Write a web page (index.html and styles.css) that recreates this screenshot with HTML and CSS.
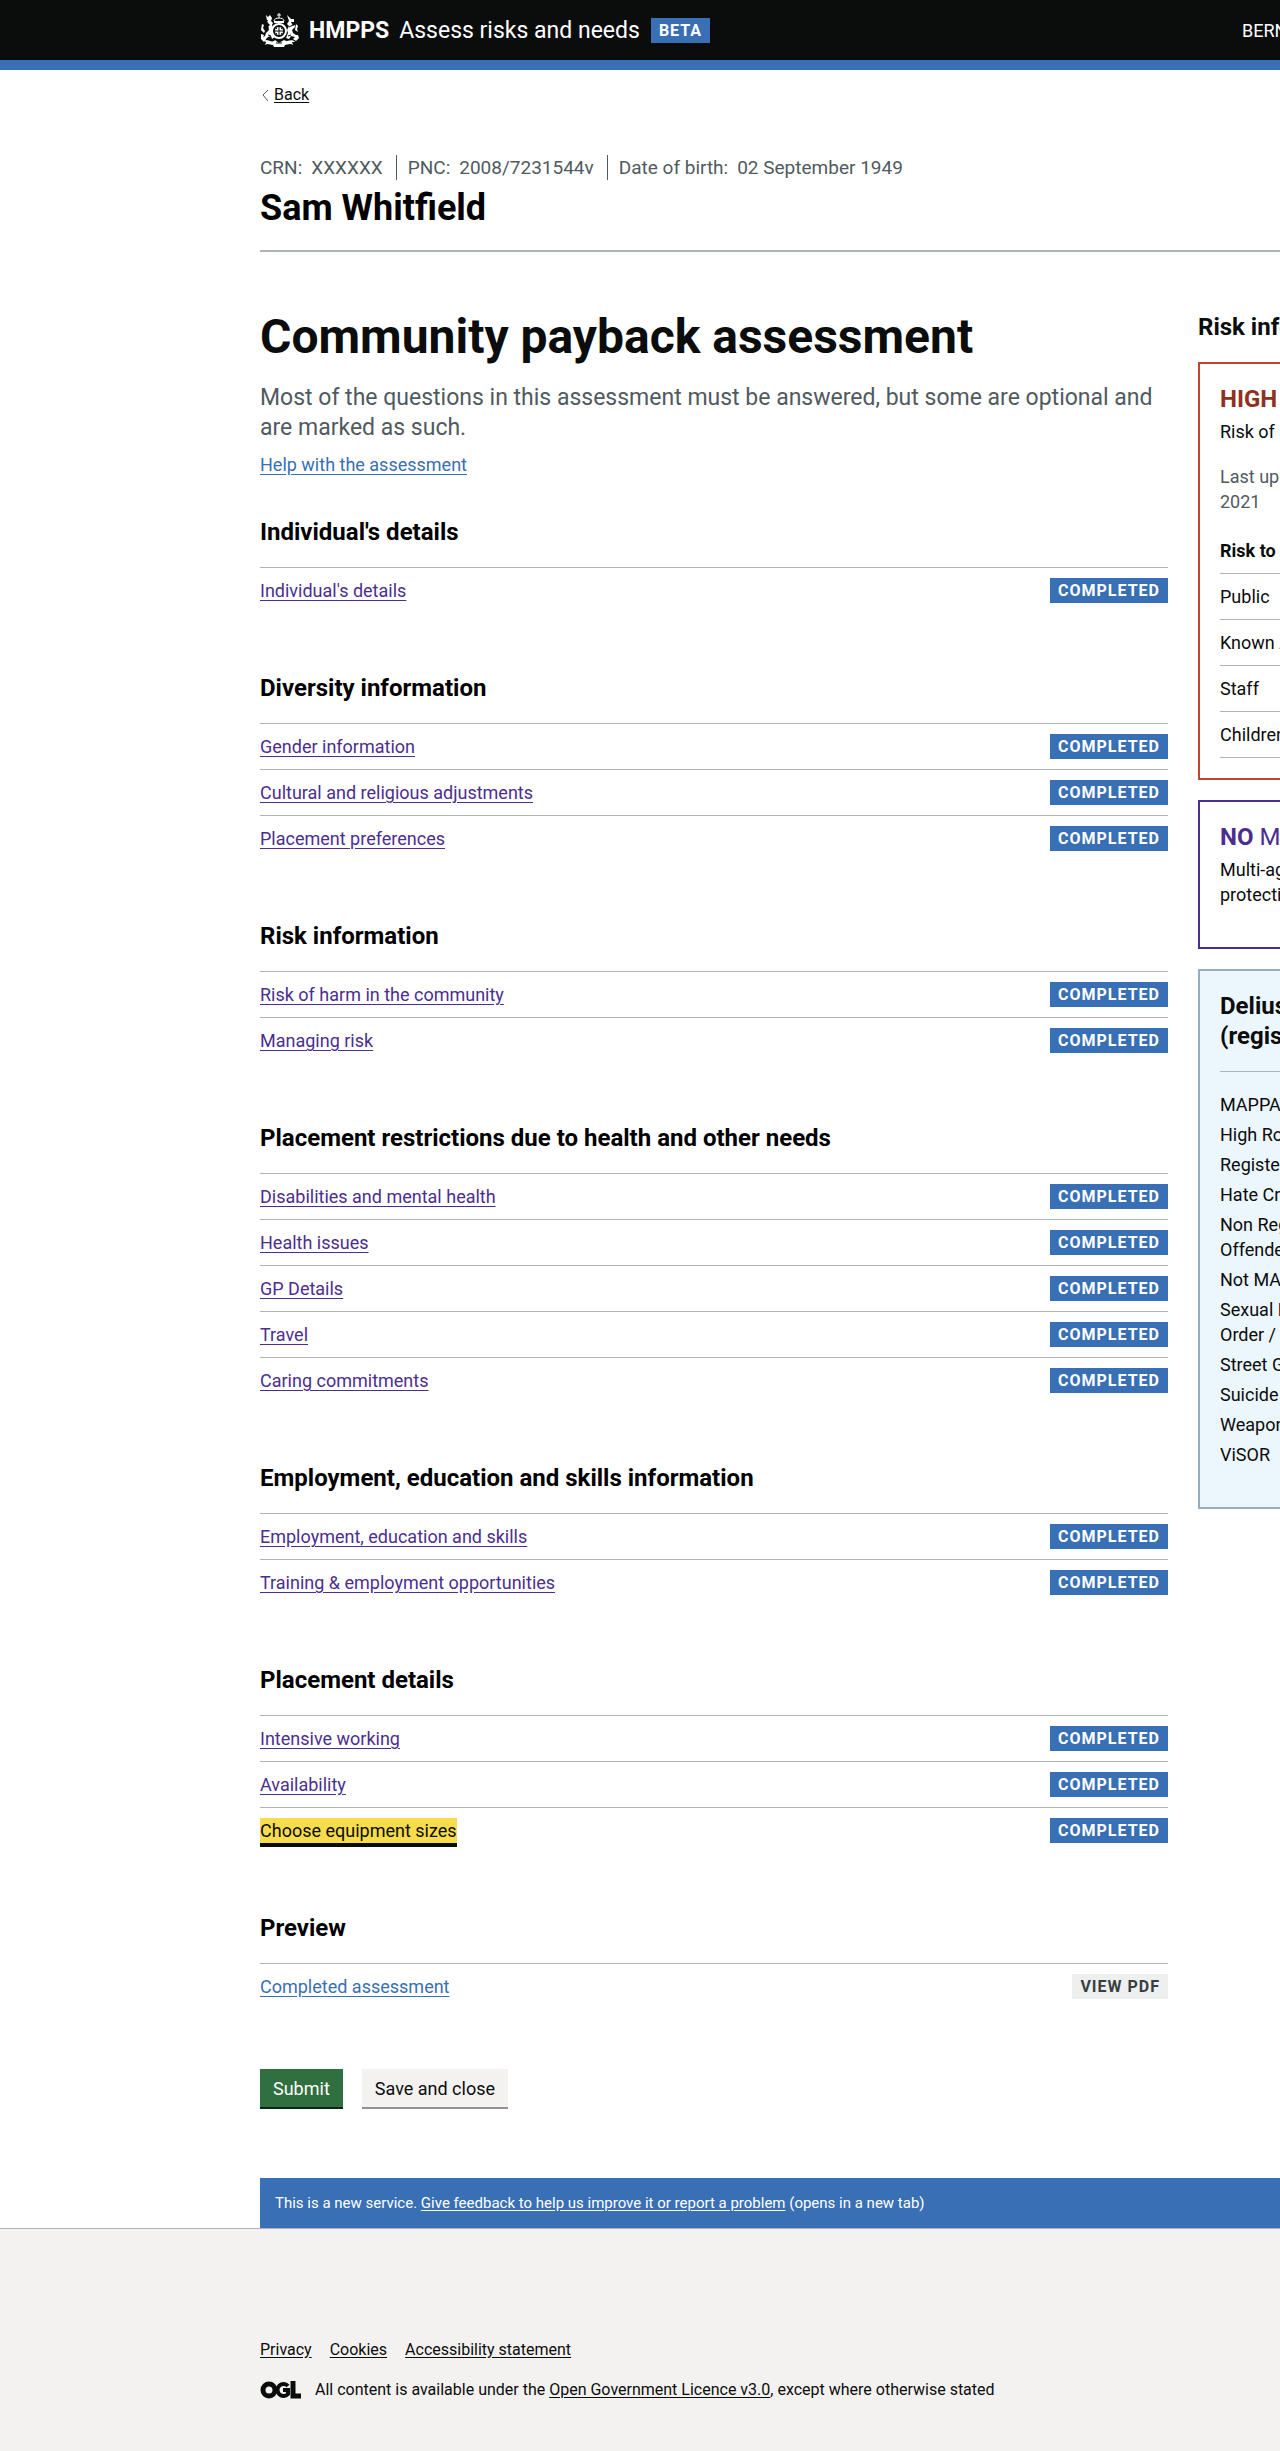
FILE: index.html
```html
<!DOCTYPE html>
<html lang="en">
<head>
  <meta charset="utf-8">
  <meta name="viewport" content="width=device-width, initial-scale=1">
  <title>Community payback assessment</title>
  <link rel="stylesheet" href="styles.css">
</head>
<body>
  <header class="header">
    <div class="header-bar">
      <svg class="crest" viewBox="0 0 39 34" width="39" height="34" aria-hidden="true">
        <g fill="none" stroke="#fff" stroke-width="1">
          <path d="M19 0v5M17 2h4"/>
          <path d="M14 8c0-4 10-4 10 0"/>
        </g>
        <g fill="#fff">
          <path d="M14 8h10v2H14z"/>
          <path d="M6 2l2 2 2-2 2 3-1 3 2 2-1 2 2 5-1 3 2 4-3 2-1-3-3 1-3 3-3 0 0-2 3-2 1-3 3-3-1-3 2-2-2-2-1-2z"/>
          <path d="M27 2l4 4 3 0 0 3-3 0 2 4 2-1 0 2-3 3 1 3 3 2-1 2-4-1-2 3-3-1 2-5-1-3 2-4-2-2 2-3z"/>
          <path d="M2 11l2 1-1 3 2 3-1 2-3-3zM36 11l2 2-1 3 1 3-3-2zM1 21l3 1-1 3 3 1-2 3-3-3zM35 22l3 0 1 3-3 3-3-2 2-2z"/>
          <path d="M4 28c3-3 7 2 10 0l1-1 4 3 5-3c4 3 7-2 11 2l-3 0 1 3c-3-2-6 0-8 0l-1 2H14l-1-2c-3 0-5-2-8 0l1-3z"/>
        </g>
        <circle cx="19" cy="18" r="7" fill="#0b0c0c"/>
        <circle cx="19" cy="18" r="7" fill="none" stroke="#fff" stroke-width="2"/>
        <circle cx="19" cy="18" r="4" fill="#fff"/>
        <path d="M19 14v8M15 18h8M16 15l1 1M21 20l1 1M16 21l1-1M21 16l1-1M16 30h6" stroke="#0b0c0c" fill="none"/>
        <path d="M5 14l4 1M29 14l4-2M8 22l3 1M28 23l3-1M6 7l2 1" stroke="#0b0c0c" fill="none"/>
      </svg>
      <a class="brand" href="#"><span class="brand-org">HMPPS</span> Assess risks and needs</a>
      <strong class="tag header-tag">BETA</strong>
      <span class="user">BERNARD</span>
    </div>
  </header>

  <div class="page">
    <a class="back" href="#"><svg width="6" height="11" viewBox="0 0 6 11" aria-hidden="true"><path d="M6 0L1 5L6 11" fill="none" stroke="#505a5f"/></svg><span>Back</span></a>

    <section class="person">
      <dl class="ids">
        <div><dt>CRN:</dt><dd>XXXXXX</dd></div>
        <div><dt>PNC:</dt><dd>2008/7231544v</dd></div>
        <div><dt>Date of birth:</dt><dd>02 September 1949</dd></div>
      </dl>
      <p class="name">Sam Whitfield</p>
    </section>

    <div class="columns">
      <main class="main">
        <h1>Community payback assessment</h1>
        <p class="lede">Most of the questions in this assessment must be answered, but some are optional and are marked as such.</p>
        <p class="help"><a class="link" href="#">Help with the assessment</a></p>

        <section class="group">
          <h2>Individual's details</h2>
          <ul class="tasks">
            <li><a class="link visited" href="#">Individual's details</a><strong class="tag">COMPLETED</strong></li>
          </ul>
        </section>

        <section class="group">
          <h2>Diversity information</h2>
          <ul class="tasks">
            <li><a class="link visited" href="#">Gender information</a><strong class="tag">COMPLETED</strong></li>
            <li><a class="link visited" href="#">Cultural and religious adjustments</a><strong class="tag">COMPLETED</strong></li>
            <li><a class="link visited" href="#">Placement preferences</a><strong class="tag">COMPLETED</strong></li>
          </ul>
        </section>

        <section class="group">
          <h2>Risk information</h2>
          <ul class="tasks">
            <li><a class="link visited" href="#">Risk of harm in the community</a><strong class="tag">COMPLETED</strong></li>
            <li><a class="link visited" href="#">Managing risk</a><strong class="tag">COMPLETED</strong></li>
          </ul>
        </section>

        <section class="group">
          <h2>Placement restrictions due to health and other needs</h2>
          <ul class="tasks">
            <li><a class="link visited" href="#">Disabilities and mental health</a><strong class="tag">COMPLETED</strong></li>
            <li><a class="link visited" href="#">Health issues</a><strong class="tag">COMPLETED</strong></li>
            <li><a class="link visited" href="#">GP Details</a><strong class="tag">COMPLETED</strong></li>
            <li><a class="link visited" href="#">Travel</a><strong class="tag">COMPLETED</strong></li>
            <li><a class="link visited" href="#">Caring commitments</a><strong class="tag">COMPLETED</strong></li>
          </ul>
        </section>

        <section class="group">
          <h2>Employment, education and skills information</h2>
          <ul class="tasks">
            <li><a class="link visited" href="#">Employment, education and skills</a><strong class="tag">COMPLETED</strong></li>
            <li><a class="link visited" href="#">Training &amp; employment opportunities</a><strong class="tag">COMPLETED</strong></li>
          </ul>
        </section>

        <section class="group">
          <h2>Placement details</h2>
          <ul class="tasks">
            <li><a class="link visited" href="#">Intensive working</a><strong class="tag">COMPLETED</strong></li>
            <li><a class="link visited" href="#">Availability</a><strong class="tag">COMPLETED</strong></li>
            <li><a class="link focused" href="#">Choose equipment sizes</a><strong class="tag">COMPLETED</strong></li>
          </ul>
        </section>

        <section class="group">
          <h2>Preview</h2>
          <ul class="tasks">
            <li><a class="link" href="#">Completed assessment</a><strong class="tag tag-grey">VIEW PDF</strong></li>
          </ul>
        </section>

        <div class="actions">
          <button class="button" type="button">Submit</button>
          <button class="button button-secondary" type="button">Save and close</button>
        </div>
      </main>

      <aside class="side">
        <h2>Risk information</h2>

        <section class="card card-high">
          <h3>HIGH RoSH</h3>
          <p>Risk of serious harm</p>
          <p class="updated">Last updated:<br>2021</p>
          <table class="risks">
            <thead><tr><th scope="col">Risk to</th></tr></thead>
            <tbody>
              <tr><td>Public</td></tr>
              <tr><td>Known Adult</td></tr>
              <tr><td>Staff</td></tr>
              <tr><td>Children</td></tr>
            </tbody>
          </table>
        </section>

        <section class="card card-mappa">
          <h3>NO <span>MAPPA</span></h3>
          <p>Multi-agency<br>protection</p>
        </section>

        <section class="card card-flags">
          <h3>Delius<br>(registers)</h3>
          <ul>
            <li>MAPPA</li>
            <li>High RoSH</li>
            <li>Registered</li>
            <li>Hate Crime</li>
            <li>Non Registered<br>Offender</li>
            <li>Not MAPPA</li>
            <li>Sexual Harm<br>Order / Notice</li>
            <li>Street Gangs</li>
            <li>Suicide</li>
            <li>Weapons</li>
            <li>ViSOR</li>
          </ul>
        </section>
      </aside>
    </div>

    <p class="feedback">This is a new service. <a href="#">Give feedback to help us improve it or report a problem</a> (opens in a new tab)</p>
  </div>

  <footer class="footer">
    <nav class="footer-links" aria-label="Support links">
      <a href="#">Privacy</a>
      <a href="#">Cookies</a>
      <a href="#">Accessibility statement</a>
    </nav>
    <div class="licence">
      <svg width="41" height="18" viewBox="0 0 41 18" role="img" aria-label="OGL">
        <g fill="none" stroke="#0b0c0c" stroke-width="5">
          <circle cx="9" cy="9" r="6"/>
          <path d="M28 5a6 6 0 1 0 0 8V9h-5" stroke-width="4"/>
          <path d="M33 0v15h8"/>
        </g>
      </svg>
      <span>All content is available under the <a href="#">Open Government Licence v3.0</a>, except where otherwise stated</span>
    </div>
  </footer>
</body>
</html>
```
FILE: styles.css
```css
:root {
  --black: #0b0c0c;
  --blue: #386fb5;
  --grey-line: #b1b4b6;
  --grey-text: #505a5f;
  --grey-light: #f3f2f1;
  --purple: #4b2e8f;
  --gutter: 260px;
}

* { box-sizing: border-box; }

body {
  margin: 0;
  background: #fff;
  color: var(--black);
  font: 18px/25px Roboto, "Liberation Sans", sans-serif;
}

h1, h2, h3, p, ul, dl, dd { margin: 0; padding: 0; }
ul { list-style: none; }
h2, h3 { font-size: 24px; line-height: 30px; font-weight: 700; }

.header {
  background: var(--black);
  border-bottom: 10px solid var(--blue);
  color: #fff;
}
.header-bar {
  display: flex;
  align-items: center;
  height: 60px;
  padding-left: var(--gutter);
}
.crest { margin-right: 10px; }
.brand {
  display: flex;
  gap: 10px;
  margin-right: 11px;
  color: #fff;
  font-size: 23px;
  text-decoration: none;
  white-space: nowrap;
}
.brand-org { font-weight: 700; }
.user {
  width: 38px;
  margin-left: auto;
  overflow: hidden;
  white-space: nowrap;
}

.tag {
  display: inline-block;
  flex: none;
  padding: 3px 8px 2px;
  background: var(--blue);
  color: #fff;
  font-size: 16px;
  line-height: 20px;
  font-weight: 700;
  letter-spacing: 1px;
}
.tag-grey { background: #eeefef; color: #383f43; }

.page { padding-left: var(--gutter); }

.back {
  display: inline-flex;
  align-items: center;
  gap: 6px;
  margin: 15px 0 50px;
  padding-left: 2px;
  color: var(--black);
  font-size: 16px;
  line-height: 20px;
}
.back { text-decoration: none; }
.back span { text-decoration: underline; text-underline-offset: 2px; }

.person {
  padding-bottom: 22px;
  border-bottom: 2px solid var(--grey-line);
}
.ids { display: flex; color: var(--grey-text); font-size: 19px; }
.ids div { display: flex; gap: 9px; padding: 0 13px 0 11px; border-left: 1px solid var(--grey-text); }
.ids div:first-child { padding-left: 0; border-left: 0; }
.name { margin-top: 8px; color: #000; font-size: 36px; line-height: 40px; font-weight: 700; }

.columns { display: flex; align-items: flex-start; gap: 30px; padding-top: 60px; }
.main { flex: 1; min-width: 0; }

h1 { font-size: 48px; line-height: 50px; font-weight: 700; }
.lede { margin-top: 21px; color: var(--grey-text); font-size: 23px; line-height: 30px; }
.help { margin: 9px 0 40px; }

.link { color: var(--blue); text-underline-offset: 3px; }
.visited { color: var(--purple); }
.focused {
  background: #f7dd4b;
  box-shadow: 0 4px var(--black);
  color: var(--black);
  text-decoration: none;
}

.group { margin-bottom: 60px; }
.group h2 { margin-bottom: 20px; color: #000; }
.tasks li {
  display: flex;
  justify-content: space-between;
  padding: 10px 0;
  border-top: 1px solid var(--grey-line);
}

.actions { display: flex; gap: 19px; padding-bottom: 71px; }
.button {
  height: 38px;
  padding: 0 13px;
  border: 0;
  background: #306f40;
  box-shadow: 0 2px #0c2712;
  color: #fff;
  font: inherit;
}
.button-secondary { background: var(--grey-light); box-shadow: 0 2px #929191; color: var(--black); }

.side { flex: 0 0 82px; overflow: hidden; white-space: nowrap; }
.side h2 { margin-bottom: 20px; }
.card {
  margin-bottom: 20px;
  padding: 20px;
  padding-right: 0;
  border: 2px solid;
  border-right: 0;
  overflow: hidden;
}
.card:last-child { margin-bottom: 0; }
.card p { margin-top: 5px; color: var(--black); }
.card-high { border-color: #c0452c; }
.card-high h3 { color: #8f3020; }
.card .updated { margin: 20px 0; color: var(--grey-text); }
.risks { width: 100%; border-collapse: collapse; }
.risks th, .risks td { padding: 10px 0; border-bottom: 1px solid var(--grey-line); text-align: left; }
.risks th { padding-top: 4px; font-weight: 700; }
.card-mappa { border-color: var(--purple); padding-bottom: 40px; color: var(--purple); }
.card-mappa h3 span { font-weight: 400; }
.card-flags { border-color: #96acbf; background: #ecf6fd; padding-bottom: 40px; }
.card-flags h3 { padding-bottom: 20px; border-bottom: 1px solid var(--grey-line); margin-bottom: 20px; }
.card-flags li + li { margin-top: 5px; }

.feedback {
  padding: 15px;
  background: var(--blue);
  color: #fff;
  font-size: 15px;
  line-height: 20px;
}
.feedback a, .footer a { color: inherit; text-underline-offset: 2px; }

.footer {
  padding: 111px 20px 51px var(--gutter);
  border-top: 1px solid var(--grey-line);
  background: var(--grey-light);
  font-size: 16px;
  line-height: 20px;
}
.footer-links { display: flex; gap: 18px; margin-bottom: 20px; }
.licence { display: flex; align-items: center; gap: 14px; }
```
